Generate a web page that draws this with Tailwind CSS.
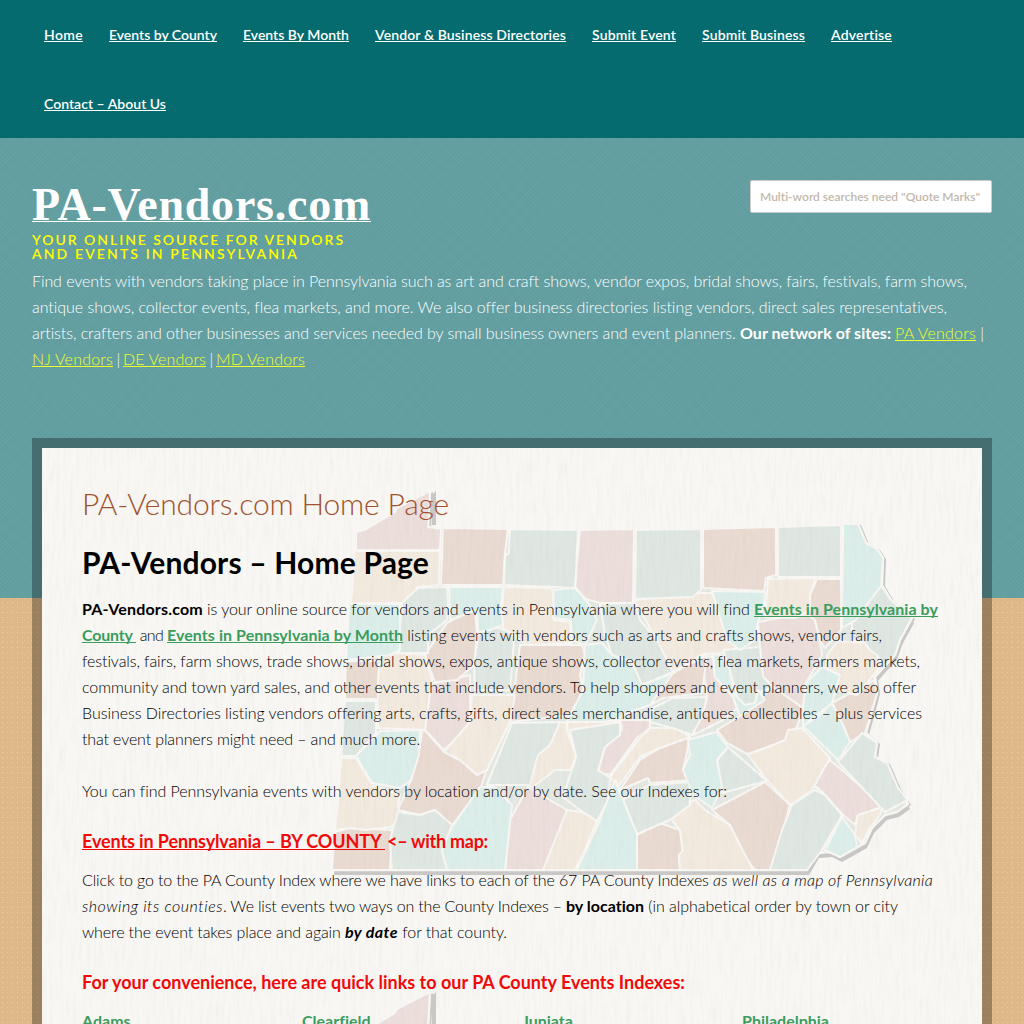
<!DOCTYPE html>
<html lang="en"><head><meta charset="utf-8"><title>PA-Vendors.com</title>
<script src="https://cdn.jsdelivr.net/npm/@tailwindcss/browser@4"></script></head>
<body class="h-[1024px] overflow-hidden bg-[#deb887] bg-[radial-gradient(circle,rgba(255,235,205,.4)_0.6px,transparent_1px),radial-gradient(circle,rgba(255,225,185,.35)_0.6px,transparent_1px)] [background-size:5px_5px,7px_7px] font-['Lato',sans-serif] text-base leading-[26px] font-light [font-variant-ligatures:none] [text-decoration-skip-ink:none]">
<div class="flex h-full flex-col">
<nav class="h-[138px] shrink-0 bg-[#056b6f] px-11 text-sm font-semibold text-white">
<div class="flex h-[69px] items-center gap-[26px] underline"><a data-w="39">Home</a><a data-w="108">Events by County</a><a data-w="106">Events By Month</a><a data-w="191">Vendor &amp; Business Directories</a><a data-w="84">Submit Event</a><a data-w="103">Submit Business</a><a data-w="61">Advertise</a></div>
<div class="flex h-[69px] items-center underline"><a data-w="122">Contact – About Us</a></div>
</nav>
<header class="h-[460px] shrink-0 bg-[#65a0a2] bg-[repeating-linear-gradient(45deg,rgba(50,115,120,.06)_0_1px,transparent_1px_3px),repeating-linear-gradient(-45deg,rgba(50,115,120,.06)_0_1px,transparent_1px_3px)] px-8 pt-[42px] text-white">
<div class="flex h-[88px] justify-between">
<div><h1 class="h-[53px] font-['Liberation_Serif',serif] text-[46px] leading-[50px] font-bold"><a class="underline decoration-1 underline-offset-[1px]" data-w="339">PA-Vendors.com</a></h1>
<p class="flex flex-col items-start text-sm leading-[14px] font-semibold text-[#ff0]"><span data-w="313">YOUR ONLINE SOURCE FOR VENDORS</span><span data-w="267">AND EVENTS IN PENNSYLVANIA</span></p></div>
<div class="h-[33px] w-[242px] rounded-[2px] border border-[#ccc] bg-white pl-[9px] text-xs leading-[31px] font-semibold text-[#c3b8ab]"><span data-w="220">Multi-word searches need "Quote Marks"</span></div>
</div>
<div>
<div class="flex"><span data-w="935">Find events with vendors taking place in Pennsylvania such as art and craft shows, vendor expos, bridal shows, fairs, festivals, farm shows,</span></div><div class="flex"><span data-w="915">antique shows, collector events, flea markets, and more. We also offer business directories listing vendors, direct sales representatives,</span></div><div class="flex"><span data-w="708">artists, crafters and other businesses and services needed by small business owners and event planners. </span><b class="font-bold" data-w="155">Our network of sites: </b><a class="text-[#f0ff2a] underline" data-w="81">PA Vendors</a><span data-w="8"> |</span></div><div class="flex"><a class="text-[#f0ff2a] underline" data-w="81">NJ Vendors</a><span data-w="10"> | </span><a class="text-[#f0ff2a] underline" data-w="83">DE Vendors</a><span data-w="10"> | </span><a class="text-[#f0ff2a] underline" data-w="89">MD Vendors</a></div>
</div>
</header>
<main class="mx-8 -mt-40 h-[586px] shrink-0 bg-black/30 px-2.5 pt-2.5">
<div class="relative h-[576px] overflow-hidden bg-[#f8f7f4] px-10 pt-[37px] text-black">
<svg class="absolute inset-0 h-[576px] w-[940px]" viewBox="42 448 940 576">
<defs>
<filter id="grain" x="0" y="0" width="100%" height="100%"><feTurbulence type="fractalNoise" baseFrequency=".3 .035" numOctaves="3" seed="4"/><feColorMatrix values="0 0 0 0 .5  0 0 0 0 .46  0 0 0 0 .4  .8 0 0 0 -.33"/></filter>
<path id="pa" d="M356 532L365 530 395 512 397 508 430 491 428 527 508 529 578 530 635 529 702 529 777 527 842 524 858 524 866 543 877 549 883 558 882 585 891 600 912 618 900 640 895 655 883 668 875 677 877 693 866 733 877 743 875 757 887 763 898 788 908 804 897 812 885 815 872 828 865 843 858 847 840 857 830 852 817 853 807 870 332 870 335 830 340 780 345 657 350 603Z"/>
</defs>
<g id="map" stroke-linejoin="round">
<use href="#pa" fill="#c9c8c6" transform="translate(3 1)"/><use href="#pa" fill="#c9c8c6" transform="translate(2 5)"/>
<path d="M436 491l-4 4v30h4z" fill="#c9c8c6"/>
<use href="#pa" fill="#e3e8e3" stroke="#f8f7f4" stroke-width="2.4"/>
<g stroke="#f8f7f4" stroke-width="2">
<g fill="#ecdedb">
<path d="M356 532L365 530 395 512 397 508 430 491 428 527 441 529 440 550 356 550Z"/>
<path d="M580 530L634 529 633 603 600 603 586 599 575 587Z"/>
<path d="M758 622L795 615 814 616 820 640 822 655 806 683 803 708 773 687 763 677 760 647Z"/>
<path d="M427 685L470 675 470 725 444 750 423 728Z"/>
<path d="M528 787L567 810 560 835 543 870 505 870 510 820Z"/>
<path d="M620 720L650 720 650 728 637 738 610 775 598 772 605 747 622 730Z"/>
<path d="M702 655L713 657 715 677 733 697 737 708 723 720 693 735 707 698Z"/>
<path d="M812 785L816 775 830 760 885 807 870 812 858 815 855 825 842 814 825 795 818 788Z"/>
</g>
<g fill="#e9dad2">
<path d="M443 528L508 529 505 553 503 585 441 585Z"/>
<path d="M703 529L776 527 776 575 766 578 764 591 703 588Z"/>
<path d="M817 579L841 579 841 630 825 648 820 640 815 620 808 615 810 595Z"/>
<path d="M447 623L475 608 477 635 474 665 457 680 435 682 425 655Z"/>
<path d="M520 645L582 645 585 655 580 675 583 690 570 715 510 722 515 685Z"/>
<path d="M346 661L380 661 378 699 345 699Z"/>
<path d="M423 728L444 752 460 760 477 775 487 768 480 790 452 825 435 810 420 815 398 810 411 780 419 750Z"/>
<path d="M335 832L350 828 392 830 390 870 332 870Z"/>
<path d="M673 673L707 655 702 693 663 698 650 705Z"/>
<path d="M660 748L690 737 687 752 683 770 692 780 650 783 648 778 620 790 640 760Z"/>
<path d="M637 835L660 823 680 830 683 853 679 855 680 870 637 870Z"/>
<path d="M712 810L765 782 790 805 782 835 770 870 755 870 740 850 730 825Z"/>
<path d="M717 730L740 716 773 687 803 708 797 727 787 737 783 742 747 754 727 743Z"/>
<path d="M832 703L875 680 877 693 865 733 850 742 843 725Z"/>
</g>
<g fill="#f3eadf">
<path d="M355 551L440 551 439 585 418 587 402 603 351 603Z"/>
<path d="M504 587L552 588 555 610 554 620 570 622 572 643 527 645 520 640 505 630 501 625Z"/>
<path d="M634 600L700 593 712 593 722 620 738 650 727 653 703 654 673 672 665 660 657 640Z"/>
<path d="M768 579L815 578 810 595 810 610 795 618 765 617Z"/>
<path d="M827 655L838 641 865 643 870 650 877 655 882 665 857 695 835 690 838 675 826 668Z"/>
<path d="M380 655L398 653 425 655 432 680 425 730 378 728 378 680Z"/>
<path d="M472 695L515 695 510 722 487 770 477 775 460 760 444 752 470 722Z"/>
<path d="M341 758L356 758 372 785 400 795 398 805 400 815 392 827 365 830 350 828 335 830 338 800Z"/>
<path d="M555 723L565 722 575 735 577 758 570 770 555 770 533 787 525 785 535 750Z"/>
<path d="M567 810L582 812 597 821 587 845 575 870 543 870Z"/>
<path d="M650 728L675 728 690 737 660 748 640 757 618 787 610 777 637 742Z"/>
<path d="M670 818L690 802 695 800 705 810 730 825 740 845 753 870 680 870 679 855 683 850 680 830Z"/>
<path d="M748 755L785 740 788 730 802 728 830 758 812 790 790 805 767 780Z"/>
<path d="M858 815L882 807 880 815 870 828 862 843 855 835Z"/>
<path d="M567 730L577 758 563 797 577 786 598 770 605 747 622 728 620 721 567 722Z"/>
</g>
<g fill="#dfe7e3">
<path d="M510 529L578 530 575 588 556 587 504 585 505 556 509 553Z"/>
<path d="M636 530L701 529 701 590 693 597 635 599Z"/>
<path d="M778 527L841 525 841 577 778 577Z"/>
<path d="M881 586L891 600 912 618 900 640 895 655 883 668 877 655 870 650 865 643 852 640 852 620 868 603Z"/>
<path d="M402 603L418 588 447 587 448 605 447 620 428 635 428 653 398 653Z"/>
<path d="M478 635L490 625 510 632 514 640 510 690 475 690 474 665Z"/>
<path d="M600 604L634 603 640 620 657 640 673 672 642 685 632 662 612 655 605 635Z"/>
<path d="M345 701L376 701 376 733 356 756 341 756Z"/>
<path d="M398 812L420 815 435 810 452 825 442 850 447 870 392 870 390 840Z"/>
<path d="M512 723L560 722 550 745 538 755 530 785 487 785 495 765Z"/>
<path d="M570 730L620 722 620 735 605 747 598 770 610 778 608 800 597 821 577 808 563 797 576 757Z"/>
<path d="M653 708L673 698 707 697 702 717 692 735 673 728 650 722Z"/>
<path d="M622 800L650 785 690 782 690 805 670 820 637 834Z"/>
<path d="M723 650L760 647 763 677 773 687 758 693 755 705 740 707 730 670Z"/>
<path d="M728 747L767 781 722 793 717 760Z"/>
<path d="M838 762L862 733 877 743 875 757 887 763 898 788 908 800 885 812Z"/>
<path d="M792 805L815 790 825 795 842 815 822 850 807 870 770 870 782 830Z"/>
</g>
<g fill="#dceeea">
<path d="M843 524L858 524 866 543 877 549 883 558 881 586 868 603 856 620 842 628Z"/>
<path d="M349 604L400 604 400 650 390 655 346 660Z"/>
<path d="M449 587L503 587 501 605 503 625 490 630 478 632 477 610 450 620Z"/>
<path d="M554 590L575 588 590 605 597 620 590 635 585 645 572 640 571 620 553 618Z"/>
<path d="M712 591L765 592 764 605 758 622 755 640 740 650 727 640Z"/>
<path d="M585 645L602 643 612 655 632 662 642 685 673 673 650 705 630 712 615 720 603 722 567 722 583 690Z"/>
<path d="M380 731L420 730 419 755 411 780 400 788 372 783 356 756Z"/>
<path d="M480 787L494 787 512 805 505 870 447 870 442 850 452 827Z"/>
<path d="M600 820L615 780 637 834 637 870 577 870Z"/>
<path d="M713 653L723 657 730 670 733 693 745 705 755 703 758 690 765 700 740 716 733 697 715 677Z"/>
<path d="M688 740L716 732 728 747 717 760 722 787 712 808 693 795 683 770 690 755Z"/>
<path d="M803 726L820 715 832 703 843 725 850 742 838 760Z"/>
<path d="M842 817L855 835 857 847 840 857 825 850Z"/>
<path d="M822 667L840 675 832 703 803 726 803 708 806 683Z"/>
</g>
</g>
</g>
<use href="#map" transform="translate(0 501)"/>
<rect x="42" y="448" width="940" height="576" filter="url(#grain)" opacity=".25"/>
</svg>
<div class="relative">
<h1 class="text-[30px] leading-9 text-[#a0522d]"><span data-w="367">PA-Vendors.com Home Page</span></h1>
<h2 class="mt-[23px] text-[30px] leading-9 font-bold"><span data-w="347">PA-Vendors – Home Page</span></h2>
<div class="mt-4"><div class="flex"><b class="font-bold" data-w="125">PA-Vendors.com </b><span data-w="547">is your online source for vendors and events in Pennsylvania where you will find </span><a class="font-bold text-[#3a9d5d] underline" data-w="184">Events in Pennsylvania by</a></div><div class="flex"><a class="font-bold text-[#3a9d5d] underline" data-w="54">County </a><span data-w="31"> and </span><a class="font-bold text-[#3a9d5d] underline" data-w="236">Events in Pennsylvania by Month</a><span data-w="479"> listing events with vendors such as arts and crafts shows, vendor fairs,</span></div><div class="flex"><span data-w="838">festivals, fairs, farm shows, trade shows, bridal shows, expos, antique shows, collector events, flea markets, farmers markets,</span></div><div class="flex"><span data-w="834">community and town yard sales, and other events that include vendors. To help shoppers and event planners, we also offer</span></div><div class="flex"><span data-w="840">Business Directories listing vendors offering arts, crafts, gifts, direct sales merchandise, antiques, collectibles – plus services</span></div><div class="flex"><span data-w="338">that event planners might need – and much more.</span></div></div>
<div class="mt-[26px] flex"><span data-w="645">You can find Pennsylvania events with vendors by location and/or by date. See our Indexes for:</span></div>
<h3 class="mt-6 flex text-lg leading-[26px] font-bold text-[#f00a0a]"><a class="underline" data-w="303">Events in Pennsylvania – BY COUNTY </a><span class="pl-0.5"></span><span data-w="101">&lt;– with map:</span></h3>
<div class="mt-[13px]"><div class="flex"><span data-w="631">Click to go to the PA County Index where we have links to each of the 67 PA County Indexes </span><i data-w="220">as well as a map of Pennsylvania</i></div><div class="flex"><i data-w="141">showing its counties</i><span data-w="343">. We list events two ways on the County Indexes – </span><b class="font-bold" data-w="78">by location</b><span data-w="254"> (in alphabetical order by town or city</span></div><div class="flex"><span data-w="263">where the event takes place and again </span><b class="font-bold italic" data-w="53">by date</b><span data-w="109"> for that county.</span></div></div>
<h3 class="mt-6 flex text-lg leading-[26px] font-bold text-[#f00a0a]"><span data-w="603">For your convenience, here are quick links to our PA County Events Indexes:</span></h3>
<div class="mt-[13px] grid h-[16px] grid-cols-[repeat(4,220px)] font-bold text-[#3a9d5d] underline"><a>Adams</a><a>Clearfield</a><a>Juniata</a><a>Philadelphia</a></div>
</div>
</div></main>
</div>
<script>
// Distribute each run's tracking so that it fills its measured width.
function fit() {
  const runs = [...document.querySelectorAll('[data-w]')];
  runs.forEach(e => Object.assign(e.style, {display: 'inline-block', flex: 'none', whiteSpace: 'pre', width: 'auto', letterSpacing: '0px'}));
  const widths = runs.map(e => { const r = document.createRange(); r.selectNodeContents(e); return r.getBoundingClientRect().width; });
  runs.forEach((e, i) => {
    e.style.letterSpacing = (e.dataset.w - widths[i]) / e.textContent.length + 'px';
    e.style.width = e.dataset.w + 'px';
  });
}
fit();
addEventListener('load', fit);
document.fonts.ready.then(fit);
</script>
</body></html>
